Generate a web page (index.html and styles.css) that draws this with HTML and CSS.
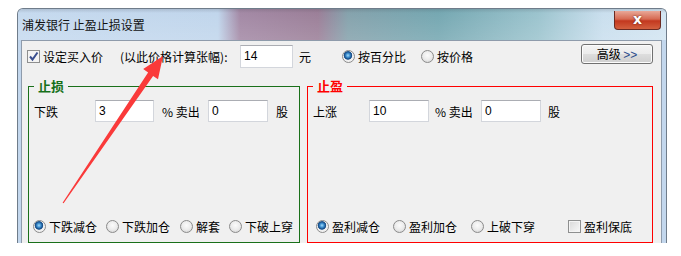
FILE: index.html
```html
<!DOCTYPE html>
<html>
<head>
  <meta charset="utf-8">
  <title>止盈止损设置</title>
  <link rel="stylesheet" href="styles.css">
</head>
<body>
  <div class="window">
    <div class="titlebar">
      <span class="title">浦发银行 止盈止损设置</span>
      <span class="close-btn">x</span>
    </div>
    <div class="content">
      <div class="top-row">
        <span class="check checked">
          <svg width="11" height="11" viewBox="0 0 11 11"><path d="M2 5.5 L4.5 8.5 L9.5 1.5" fill="none" stroke="#3a4f8f" stroke-width="2"/></svg>
        </span>
        <span class="lbl-buy">设定买入价</span>
        <span class="hint">(以此价格计算张幅):</span>
        <input class="field price" type="text" value="14">
        <span class="unit">元</span>
        <span class="opt opt-pct"><span class="radio on"></span>按百分比</span>
        <span class="opt opt-price"><span class="radio"></span>按价格</span>
        <span class="btn">高级 <span class="arrows">&gt;&gt;</span></span>
      </div>
      <div class="groups">
        <fieldset class="group loss">
          <legend>止损</legend>
          <div class="value-row">
            <span class="row-label">下跌</span>
            <input class="field pct-val" type="text" value="3">
            <span class="pct">% 卖出</span>
            <input class="field qty" type="text" value="0">
            <span class="share">股</span>
          </div>
          <div class="mode-row">
            <span class="opt w1"><span class="radio on"></span>下跌减仓</span>
            <span class="opt w2"><span class="radio"></span>下跌加仓</span>
            <span class="opt w3"><span class="radio"></span>解套</span>
            <span class="opt"><span class="radio"></span>下破上穿</span>
          </div>
        </fieldset>
        <fieldset class="group gain">
          <legend>止盈</legend>
          <div class="value-row">
            <span class="row-label">上涨</span>
            <input class="field pct-val" type="text" value="10">
            <span class="pct">% 卖出</span>
            <input class="field qty" type="text" value="0">
            <span class="share">股</span>
          </div>
          <div class="mode-row">
            <span class="opt w1"><span class="radio on"></span>盈利减仓</span>
            <span class="opt w2"><span class="radio"></span>盈利加仓</span>
            <span class="opt w3"><span class="radio"></span>上破下穿</span>
            <span class="opt"><span class="check"></span>盈利保底</span>
          </div>
        </fieldset>
      </div>
    </div>
  </div>

  <!-- annotation arrow drawn over the screenshot -->
  <svg class="arrow" width="681" height="256" viewBox="0 0 681 256">
    <polygon fill="#fa3a3a" points="62.6,202.7 63.6,203.3 153.1,75.9 158,79.3 163,56 143.2,69.1 148.1,72.5"/>
  </svg>
</body>
</html>
```

FILE: styles.css
```css
body {
  margin: 0;
  background: #fff;
  font-family: "Noto Sans CJK SC", sans-serif;
  font-size: 12px;
  color: #000;
}

.window {
  margin: 8px 0 0 17px;
  width: 648px;
  height: 234px;
  border: 1px solid #6f7c8a;
  border-bottom: none;
  border-radius: 6px 6px 0 0;
  background: #c3d7ed;
  overflow: hidden;
}

.titlebar {
  display: flex;
  align-items: flex-start;
  height: 31px;
  background:
    linear-gradient(rgba(40, 40, 50, 0.15), rgba(255, 255, 255, 0) 4px, rgba(255, 255, 255, 0.12)),
    linear-gradient(to right, #c6daef 0, #c1d6ec 200px, #a48aa6 222px, #9c8099 300px, #86a3ad 330px, #76a8b2 420px, #9cc4ce 520px, #cadfee 585px, #d3e5f2 648px);
}

.title {
  padding: 8px 0 0 4px;
  line-height: 16px;
  color: #111;
}

.close-btn {
  margin: 2px 5px 0 auto;
  width: 45px;
  height: 18px;
  border: 1px solid #6b2a22;
  border-top: none;
  border-radius: 0 0 4px 4px;
  background: linear-gradient(#e9a898, #d66a52 45%, #c3381f 55%, #d3603f);
  color: #fff;
  font-family: "DejaVu Sans", sans-serif;
  font-weight: bold;
  font-size: 14px;
  line-height: 17px;
  text-align: center;
  text-shadow: 0 0 2px #5a1a10;
}

.content {
  margin: 0 4px 0 3px;
  height: 230px;
  border: 1px solid #8e9bab;
  background: #f0f0f0;
}

.top-row {
  display: flex;
  align-items: center;
  height: 26px;
  margin-top: 2px;
}

.check {
  display: inline-flex;
  align-items: center;
  justify-content: center;
  flex: none;
  width: 13px;
  height: 13px;
  box-sizing: border-box;
  border: 1px solid #8e8f8f;
  background: linear-gradient(135deg, #d8d8d8, #f8f8f8);
  box-shadow: inset 0 0 0 1px #f4f4f4;
}

.check.checked {
  background: #f4f4f4;
}

.top-row .check {
  margin-left: 5px;
}

.lbl-buy {
  margin-left: 3px;
}

.hint {
  display: inline-block;
  width: 108px;
  margin-left: 17px;
  white-space: nowrap;
}

.field {
  box-sizing: border-box;
  height: 22px;
  margin: 0;
  padding: 0 3px;
  border: 1px solid #d3d6dc;
  border-top-color: #abadb3;
  background: #fff;
  font-family: "Liberation Sans", sans-serif;
  font-size: 12px;
  color: #000;
}

.field.price {
  width: 53px;
  height: 23px;
  margin-left: 12px;
}

.unit {
  margin-left: 6px;
}

.opt {
  display: inline-flex;
  align-items: center;
  gap: 3px;
  white-space: nowrap;
}

.opt-pct {
  margin-left: 31px;
}

.opt-price {
  margin-left: 15px;
}

.radio {
  flex: none;
  width: 13px;
  height: 13px;
  box-sizing: border-box;
  border-radius: 50%;
  border: 1px solid #8b8b8b;
  background: radial-gradient(circle at 50% 40%, #fbfbfb 0, #ececec 50%, #cfcfcf 100%);
}

.radio.on {
  background: radial-gradient(circle at 45% 40%, #a6dcfa 0, #3c8fd0 2px, #1a4f8a 3.5px, #2a5f96 4px, #eeeeee 4.6px, #f7f7f7 100%);
}

.btn {
  margin: 0 8px 4px auto;
  width: 72px;
  height: 20px;
  box-sizing: border-box;
  border: 1px solid #707070;
  border-radius: 3px;
  background: linear-gradient(#f4f4f4, #ebebeb 50%, #dddddd 50%, #cfcfcf);
  box-shadow: inset 0 0 0 1px #fcfcfc;
  text-align: center;
  line-height: 18px;
}

.arrows {
  color: #2b4a8a;
  font-family: "Liberation Sans", sans-serif;
}

.groups {
  display: flex;
  gap: 7px;
  margin: 9px 0 0 6px;
}

.group {
  display: flex;
  flex-direction: column;
  box-sizing: border-box;
  height: 165px;
  margin: 0;
  padding: 6px 0 0 5px;
  min-width: 0;
}

.group legend {
  padding: 0 4px;
  font-weight: bold;
  font-size: 13px;
  line-height: 16px;
}

.loss {
  width: 272px;
  border: 1px solid #1a701a;
}

.loss legend {
  color: #16701a;
}

.gain {
  width: 346px;
  border: 1px solid #ff0000;
}

.gain legend {
  color: #ff0000;
}

.value-row {
  display: flex;
  align-items: center;
  height: 22px;
}

.row-label {
  width: 61px;
}

.pct {
  width: 38px;
  margin-left: 8px;
  white-space: nowrap;
}

.field.pct-val {
  width: 59px;
}

.field.qty {
  width: 60px;
  margin-left: 8px;
}

.share {
  margin-left: 8px;
}

.gain .row-label {
  width: 56px;
}

.gain .field.pct-val {
  width: 60px;
}

.gain .pct {
  margin-left: 6px;
}

.gain .share {
  margin-left: 7px;
}

.mode-row {
  display: flex;
  align-items: center;
  height: 16px;
  margin: auto 0 8px -1px;
}

.loss .w1 { width: 73px; }
.loss .w2 { width: 74px; }
.loss .w3 { width: 49px; }

.gain .mode-row {
  margin-left: 3px;
}

.gain .w1 { width: 77px; }
.gain .w2 { width: 78px; }
.gain .w3 { width: 97px; }

.arrow {
  position: absolute;
  left: 0;
  top: 0;
  pointer-events: none;
}
```
